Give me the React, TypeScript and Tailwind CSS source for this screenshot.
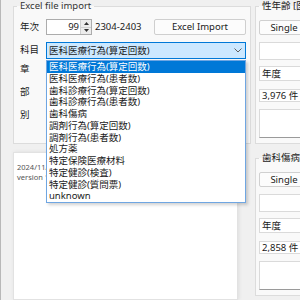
const subjects = [
  "医科医療行為(算定回数)",
  "医科医療行為(患者数)",
  "歯科診療行為(算定回数)",
  "歯科診療行為(患者数)",
  "歯科傷病",
  "調剤行為(算定回数)",
  "調剤行為(患者数)",
  "処方薬",
  "特定保険医療材料",
  "特定健診(検査)",
  "特定健診(質問票)",
  "unknown",
];

function Spinner({ value }: { value: number }) {
  return (
    <div className="flex h-[16px] w-[46px] border border-[#acacac] bg-white">
      <span className="flex-1 pr-[1px] text-right leading-[14px]">{value}</span>
      <div className="flex w-[11px] flex-col">
        <span className="flex flex-1 items-center justify-center border-b border-l border-[#cfcfcf] bg-[#ececec]">
          <svg width="5" height="3" viewBox="0 0 5 3">
            <path d="M0 3 L2.5 0 L5 3 Z" fill="#333" />
          </svg>
        </span>
        <span className="flex flex-1 items-center justify-center border-l border-[#cfcfcf] bg-[#ececec]">
          <svg width="5" height="3" viewBox="0 0 5 3">
            <path d="M0 0 L2.5 3 L5 0 Z" fill="#333" />
          </svg>
        </span>
      </div>
    </div>
  );
}

function StatGroup({ title, count }: { title: string; count: string }) {
  return (
    <fieldset className="h-[144px] w-[200px] border border-[#dcdcdc] bg-[#f9f9f9] pl-[3px] pt-[8px]">
      <legend className="px-[3px] leading-[12px] text-[#222]">{title}</legend>
      <div className="flex flex-col">
        <button className="h-[15px] w-[50px] rounded-[2px] border border-[#d0d0d0] bg-[#fcfcfc] leading-[13px]">
          Single
        </button>
        <div className="mt-[7px] h-[18px] border border-[#dadada] bg-white" />
        <div className="mt-[6px] h-[15px] border border-[#dadada] bg-white pl-[2px] leading-[13px]">年度</div>
        <div className="mt-[8px] h-[13px] border border-[#dadada] bg-white pl-[2px] leading-[11px]">{count}</div>
        <div className="mt-[7px] h-[29px] border border-[#dadada] border-b-[#9a9a9a] bg-white" />
      </div>
    </fieldset>
  );
}

export default function App() {
  return (
    <div className="flex h-[300px] w-[300px] gap-[4px] overflow-hidden border-l border-[#b8b8b8] bg-[#f0f0f0] pl-[12px] font-['Noto_Sans','Noto_Sans_CJK_JP',sans-serif] text-[9.5px] text-[#1a1a1a]">
      {/* left column: import group + info panel */}
      <div className="flex w-[238px] shrink-0 flex-col">
        <fieldset className="h-[144px] border border-[#dcdcdc] bg-[#f9f9f9] pl-[3px] pr-[4px] pt-[7px]">
          <legend className="px-[3px] leading-[12px] text-[#333]">Excel file import</legend>
          <div className="flex flex-col">
            <div className="flex h-[16px] items-center pl-[3px]">
              <span className="w-[26px]">年次</span>
              <Spinner value={99} />
              <span className="ml-[3px]">2304-2403</span>
              <button className="ml-auto h-[16px] w-[92px] rounded-[2px] border border-[#cfcfcf] bg-[#fcfcfc] leading-[14px]">
                Excel Import
              </button>
            </div>
            <div className="mt-[7px] flex h-[17px] items-center pl-[3px]">
              <span className="w-[26px]">科目</span>
              <div className="relative h-full flex-1">
                <div className="flex h-full items-center justify-between border border-[#0078d7] bg-[#cce8ff] pl-[2px] pr-[3px]">
                  <span className="leading-[15px]">{subjects[0]}</span>
                  <svg width="8" height="5" viewBox="0 0 8 5">
                    <path d="M0.5 0.5 L4 4 L7.5 0.5" fill="none" stroke="#606060" strokeWidth="1" />
                  </svg>
                </div>
                {/* open dropdown list */}
                <ul className="absolute left-0 top-full z-10 mt-[1px] w-full border border-[#6fa6e2] bg-white shadow-[2px_2px_3px_rgba(0,0,0,0.18)]">
                  {subjects.map((s, i) => (
                    <li
                      key={s}
                      className={
                        i === 0
                          ? "h-[11.75px] bg-[#0078d7] pl-[2px] leading-[11.75px] text-white"
                          : "h-[11.75px] pl-[2px] leading-[11.75px]"
                      }
                    >
                      {s}
                    </li>
                  ))}
                </ul>
              </div>
            </div>
            <div className="mt-[2px] flex flex-col gap-[6px] pl-[3px]">
              {["章", "部", "別"].map((l) => (
                <div key={l} className="flex h-[17px] items-center">
                  <span className="w-[26px]">{l}</span>
                  <div className="h-full flex-1 border border-[#cfcfcf] bg-white" />
                </div>
              ))}
            </div>
          </div>
        </fieldset>
        <div className="mt-[8px] w-[225px] flex-1 border border-[#e2e2e2] bg-white pl-[3px] pt-[9px] text-[7.5px] leading-[10px] text-[#555] shadow-[1px_0_4px_rgba(0,0,0,0.08)]">
          <p>2024/11/15</p>
          <p>version 1.0</p>
        </div>
      </div>

      {/* right column: stat groups */}
      <div className="flex w-[200px] shrink-0 flex-col gap-[8px]">
        <StatGroup title="性年齢 [医科]" count="3,976 件" />
        <StatGroup title="歯科傷病" count="2,858 件" />
      </div>
    </div>
  );
}
